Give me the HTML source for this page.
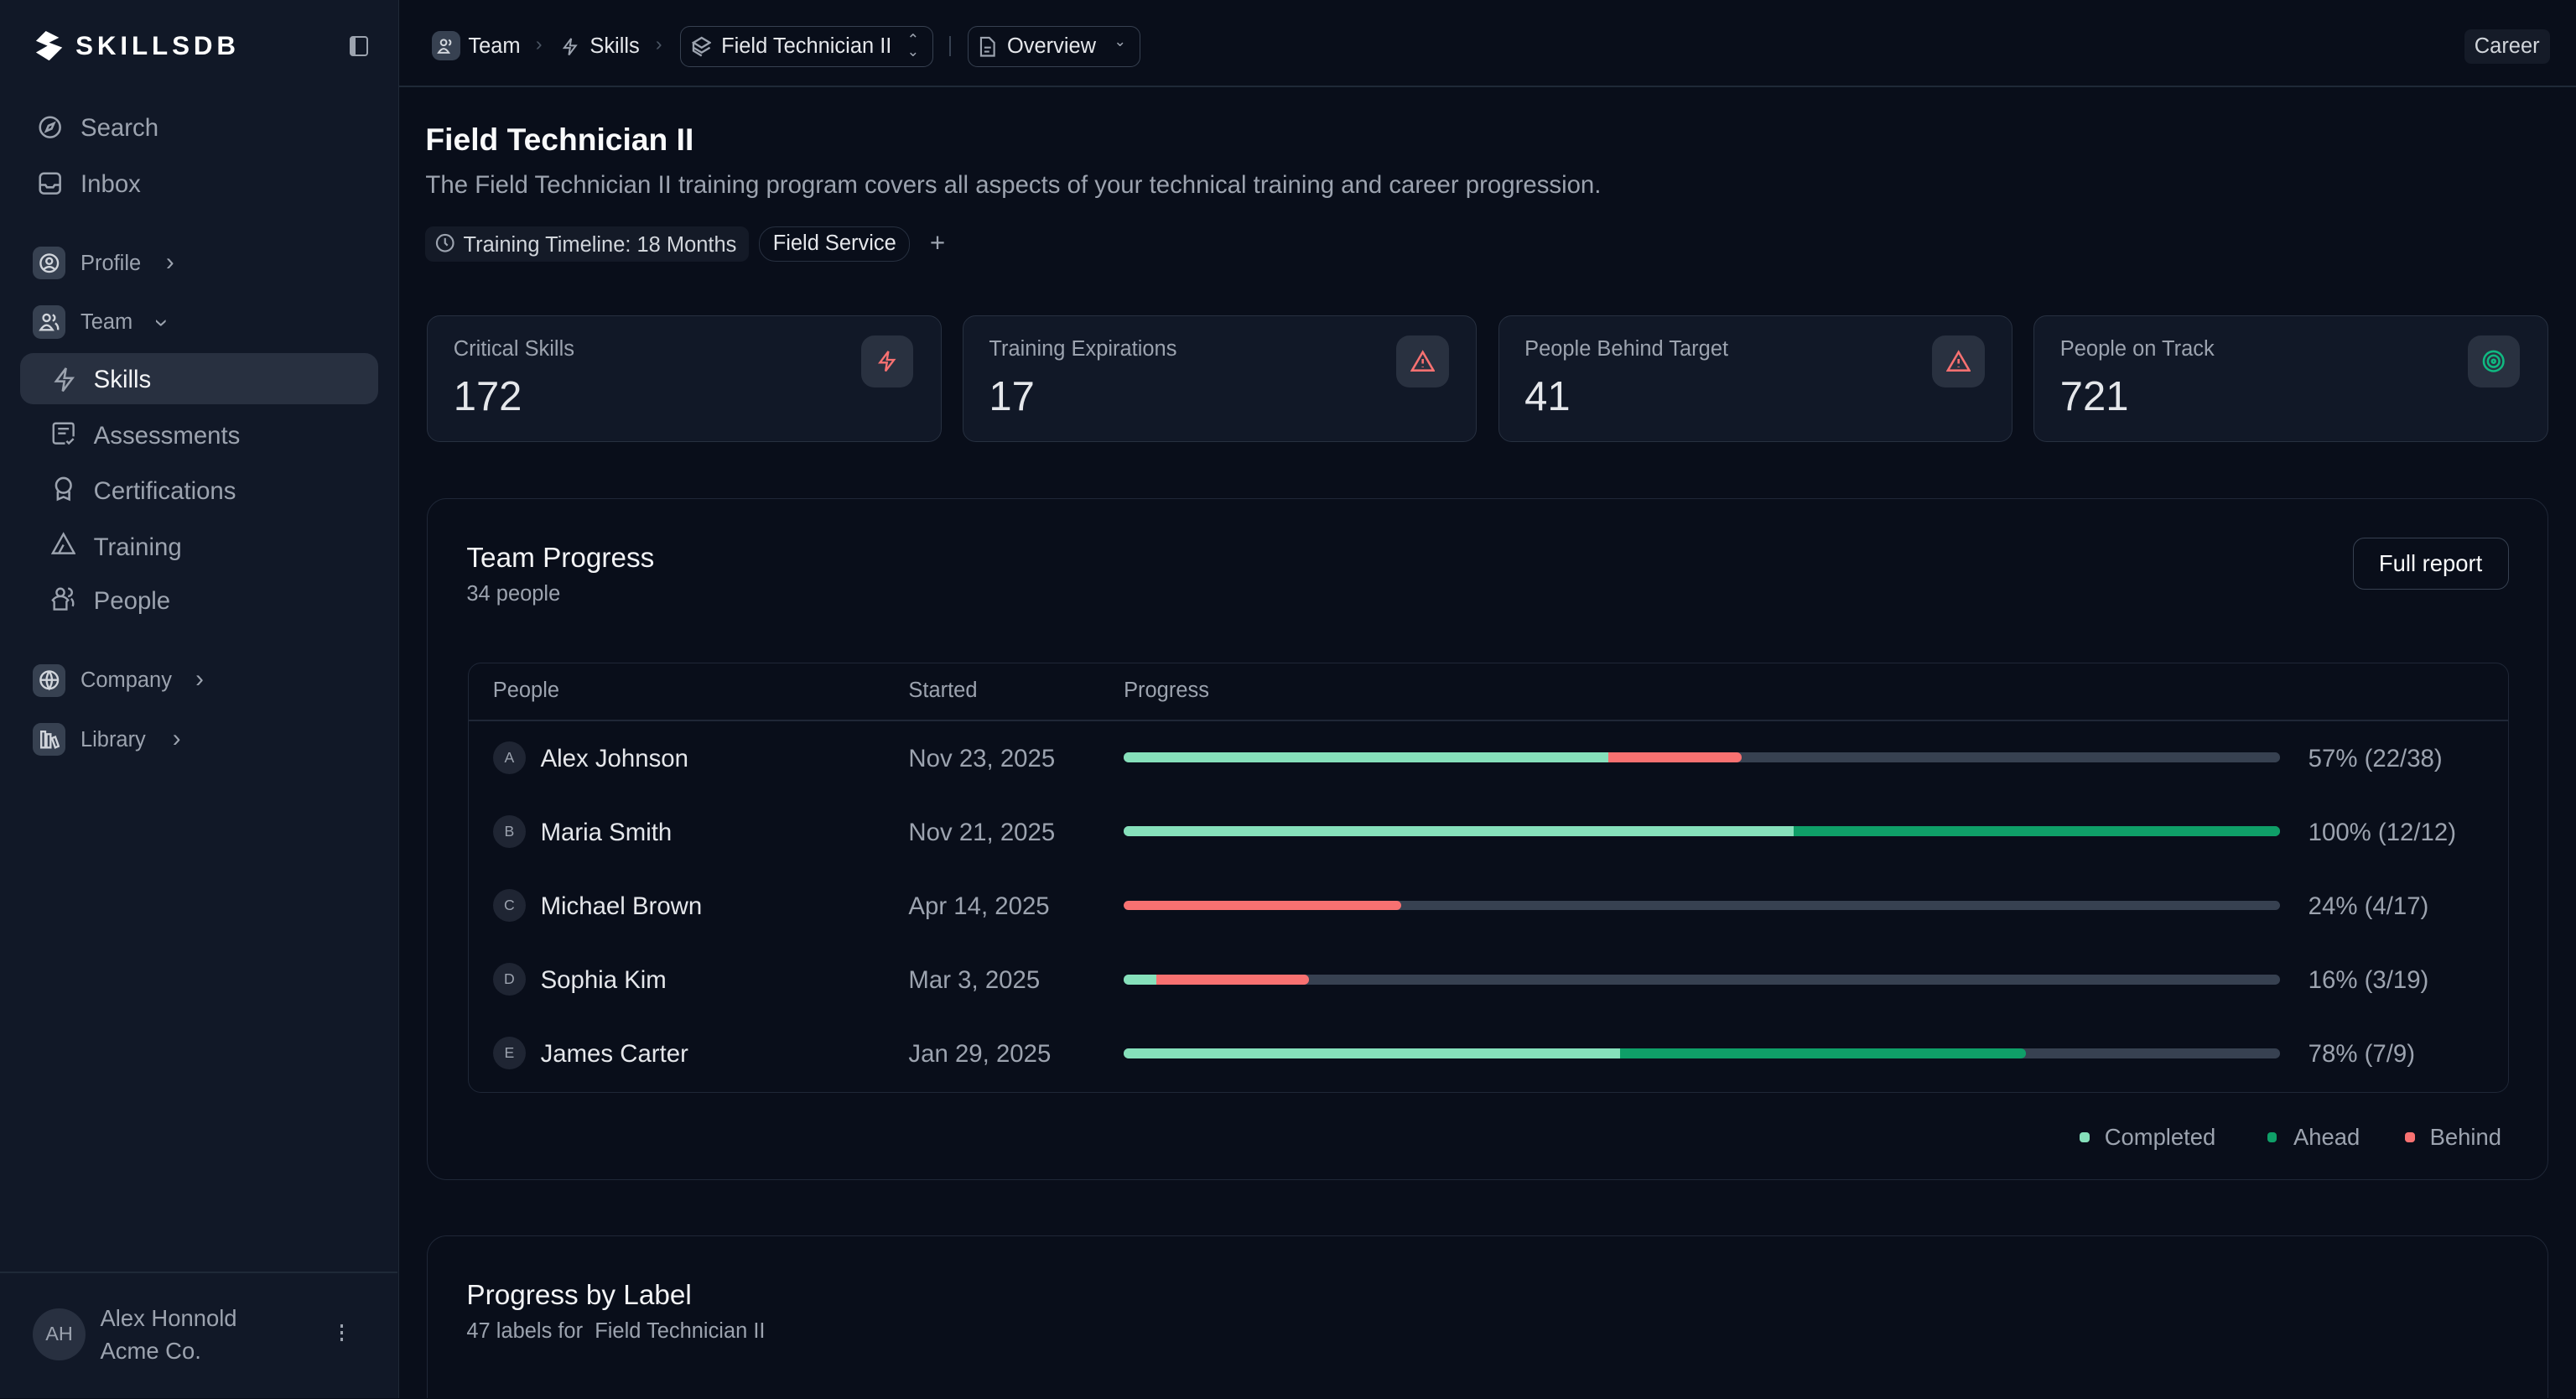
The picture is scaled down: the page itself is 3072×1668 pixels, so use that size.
<!DOCTYPE html>
<html><head><meta charset="utf-8"><style>
*{box-sizing:border-box;margin:0;padding:0}
html,body{width:3072px;height:1668px;overflow:hidden;background:#090e1a}
#w{zoom:1.95918;width:1568px;height:851px;position:relative;font-family:"Liberation Sans",sans-serif;color:#e5e7eb;background:#090e1a;overflow:hidden}
.a{position:absolute;white-space:nowrap}
#sb{position:absolute;left:0;top:0;width:243px;height:851px;background:#111827;border-right:1px solid #1f2937}
.nav{font-size:15px;color:#9ca3af;line-height:18px}
.gi{position:absolute;width:20px;height:20px;border-radius:5px;background:#374151;display:flex;align-items:center;justify-content:center}
svg{display:block}
.card{position:absolute;background:#111827;border:1px solid #273040;border-radius:8px}
.ib{position:absolute;width:32px;height:32px;border-radius:8px;background:#293140;display:flex;align-items:center;justify-content:center}
.lbl{font-size:13px;color:#9ca3af}
.val{font-size:25px;color:#e5e7eb}
.bar{position:absolute;left:684px;width:704px;height:6px;border-radius:3px;background:#374151;overflow:hidden}
.bar i{position:absolute;top:0;height:6px}
.lg{background:#86e0bb}.dg{background:#0f9f68}.rd{background:#f87171}
.av{position:absolute;left:300px;width:20px;height:20px;border-radius:10px;background:#1f2533;font-size:9px;color:#9ca3af;display:flex;align-items:center;justify-content:center}
.row{font-size:15px}
.chev{font-size:15px;color:#9ca3af}
</style></head><body><div id="w">
<div id="sb">
 <svg class="a" style="left:20px;top:19px" width="20" height="18" viewBox="0 0 20 18"><path d="M8 0 L16 4 L10 7 L18 10 L10 18 L2 13 L9 9 L2 6 Z" fill="#fff"/></svg>
 <div class="a" style="left:46px;top:19px;font-size:16px;font-weight:bold;letter-spacing:2.5px;color:#fff">SKILLSDB</div>
 <div class="a" style="left:213px;top:22px;width:11px;height:12px;border:1.5px solid #9ca3af;border-radius:2px;border-left-width:4px"></div>
 <svg class="a" style="left:23px;top:70px" width="15" height="15" viewBox="0 0 16 16" fill="none" stroke="#9ca3af" stroke-width="1.4"><circle cx="8" cy="8" r="6.5"/><path d="M10.5 5.5 L9 9 L5.5 10.5 L7 7 Z"/></svg>
 <div class="a nav" style="left:49px;top:69px">Search</div>
 <svg class="a" style="left:23px;top:104px" width="15" height="15" viewBox="0 0 16 16" fill="none" stroke="#9ca3af" stroke-width="1.4"><rect x="1.5" y="1.5" width="13" height="13" rx="2.5"/><path d="M1.5 9 H5 L6 10.5 H10 L11 9 H14.5"/></svg>
 <div class="a nav" style="left:49px;top:103px">Inbox</div>
 <div class="gi" style="left:20px;top:150px"><svg width="13" height="13" viewBox="0 0 16 16" fill="none" stroke="#d1d5db" stroke-width="1.5"><circle cx="8" cy="8" r="6.5"/><circle cx="8" cy="6.5" r="2.2"/><path d="M4 12.5 Q8 9 12 12.5"/></svg></div>
 <div class="a" style="left:49px;top:153px;font-size:13px;color:#9ca3af">Profile</div>
 <div class="a chev" style="left:101px;top:151px">›</div>
 <div class="gi" style="left:20px;top:186px"><svg width="13" height="13" viewBox="0 0 16 16" fill="none" stroke="#d1d5db" stroke-width="1.5"><circle cx="6" cy="5" r="2.5"/><path d="M1.5 14 Q6 7 10.5 14 Z"/><path d="M10.5 2.8 A2.3 2.3 0 0 1 10.5 7.2 M12.5 9 Q15 11 14.5 14"/></svg></div>
 <div class="a" style="left:49px;top:189px;font-size:13px;color:#9ca3af">Team</div>
 <div class="a chev" style="left:96px;top:188px;transform:rotate(90deg)">›</div>
 <div class="a" style="left:12px;top:215px;width:218px;height:31px;border-radius:8px;background:#283040"></div>
 <svg class="a" style="left:32px;top:223px" width="14" height="16" viewBox="0 0 14 16" fill="none" stroke="#9ca3af" stroke-width="1.3"><path d="M8 1 L2 9 H7 L6 15 L12 7 H7 Z"/></svg>
 <div class="a nav" style="left:57px;top:222px;color:#f3f4f6">Skills</div>
 <svg class="a" style="left:31px;top:256px" width="15" height="15" viewBox="0 0 16 16" fill="none" stroke="#9ca3af" stroke-width="1.3"><path d="M9 14.5 H3 Q1.5 14.5 1.5 13 V3 Q1.5 1.5 3 1.5 H13 Q14.5 1.5 14.5 3 V10"/><path d="M4.5 5 H11.5 M4.5 8 H9.5 M10 13 L11.5 14.5 L14.5 11.5"/></svg>
 <div class="a nav" style="left:57px;top:256px">Assessments</div>
 <svg class="a" style="left:32px;top:290px" width="13" height="15" viewBox="0 0 13 15" fill="none" stroke="#9ca3af" stroke-width="1.3"><circle cx="6.5" cy="5.5" r="4.5"/><path d="M3 9 V14 L6.5 12.5 L10 14 V9"/></svg>
 <div class="a nav" style="left:57px;top:290px">Certifications</div>
 <svg class="a" style="left:31px;top:323px" width="15" height="15" viewBox="0 0 16 16" fill="none" stroke="#9ca3af" stroke-width="1.3"><path d="M1 14.5 L8 2 L15 14.5 Z M5 14.5 L8 9"/></svg>
 <div class="a nav" style="left:57px;top:324px">Training</div>
 <svg class="a" style="left:31px;top:357px" width="15" height="15" viewBox="0 0 16 16" fill="none" stroke="#9ca3af" stroke-width="1.3"><circle cx="6" cy="4" r="2.5"/><path d="M2 15 V10 L1 9 Q3 6.5 6 6.5 Q9 6.5 11 9 L10 10 V15 Z"/><path d="M11 1.5 A2.5 2.5 0 0 1 11 6.5 M13 8 Q15 10 14 13"/></svg>
 <div class="a nav" style="left:57px;top:357px">People</div>
 <div class="gi" style="left:20px;top:404px"><svg width="13" height="13" viewBox="0 0 16 16" fill="none" stroke="#d1d5db" stroke-width="1.5"><circle cx="8" cy="8" r="6.5"/><path d="M1.5 8 H14.5 M8 1.5 Q4 8 8 14.5 Q12 8 8 1.5"/></svg></div>
 <div class="a" style="left:49px;top:407px;font-size:13px;color:#9ca3af">Company</div>
 <div class="a chev" style="left:119px;top:405px">›</div>
 <div class="gi" style="left:20px;top:440px"><svg width="13" height="13" viewBox="0 0 16 16" fill="none" stroke="#d1d5db" stroke-width="1.5"><path d="M2 2 V14 H5 V2 Z M6 4 V14 H9 V4 Z M10 7 L12.5 14 L15 13 L12.5 6 Z"/></svg></div>
 <div class="a" style="left:49px;top:443px;font-size:13px;color:#9ca3af">Library</div>
 <div class="a chev" style="left:105px;top:441px">›</div>
 <div class="a" style="left:0;top:774px;width:242px;height:1px;background:#1f2937"></div>
 <div class="a" style="left:20px;top:796px;width:32px;height:32px;border-radius:16px;background:#283040;font-size:12px;color:#9ca3af;display:flex;align-items:center;justify-content:center">AH</div>
 <div class="a" style="left:61px;top:794px;font-size:14px;color:#9ca3af">Alex Honnold</div>
 <div class="a" style="left:61px;top:814px;font-size:14px;color:#9ca3af">Acme Co.</div>
 <div class="a" style="left:207px;top:806px;width:2px;line-height:0"><i style="display:block;width:2px;height:2px;background:#9ca3af;margin-bottom:2px"></i><i style="display:block;width:2px;height:2px;background:#9ca3af;margin-bottom:2px"></i><i style="display:block;width:2px;height:2px;background:#9ca3af"></i></div>
</div>
<!-- top bar -->
<div class="a" style="left:243px;top:52px;width:1325px;height:1px;background:#1f2937"></div>
<div class="gi" style="left:263px;top:19px;width:17px;height:18px;background:#374151"><svg width="11" height="11" viewBox="0 0 16 16" fill="none" stroke="#d1d5db" stroke-width="1.5"><circle cx="6" cy="5" r="2.5"/><path d="M1.5 14 Q6 7 10.5 14 Z"/><path d="M10.5 2.8 A2.3 2.3 0 0 1 10.5 7.2"/></svg></div>
<div class="a" style="left:285px;top:21px;font-size:13px">Team</div>
<div class="a" style="left:326px;top:20px;font-size:12px;color:#4b5563">›</div>
<svg class="a" style="left:342px;top:22px" width="10" height="13" viewBox="0 0 14 16" fill="none" stroke="#9ca3af" stroke-width="1.4"><path d="M8 1 L2 9 H7 L6 15 L12 7 H7 Z"/></svg>
<div class="a" style="left:359px;top:21px;font-size:13px">Skills</div>
<div class="a" style="left:399px;top:20px;font-size:12px;color:#4b5563">›</div>
<div class="a" style="left:414px;top:16px;width:154px;height:25px;border:1px solid #374151;border-radius:6px"></div>
<svg class="a" style="left:421px;top:22px" width="12" height="13" viewBox="0 0 12 13" fill="none" stroke="#9ca3af" stroke-width="1.2"><path d="M6 1 L11 4 L6 7 L1 4 Z M1 7 L6 10 L11 7 M1 4 V9 L6 12"/></svg>
<div class="a" style="left:439px;top:21px;font-size:13px">Field Technician II</div>
<div class="a" style="left:552px;top:21px;font-size:9px;color:#9ca3af;line-height:7px">⌃<br>⌄</div>
<div class="a" style="left:578px;top:22px;width:1px;height:12px;background:#374151"></div>
<div class="a" style="left:589px;top:16px;width:105px;height:25px;border:1px solid #374151;border-radius:6px"></div>
<svg class="a" style="left:596px;top:22px" width="10" height="13" viewBox="0 0 10 13" fill="none" stroke="#9ca3af" stroke-width="1.1"><path d="M1 1 H6 L9 4 V12 H1 Z M3 7 H7 M3 9.5 H6"/></svg>
<div class="a" style="left:613px;top:21px;font-size:13px">Overview</div>
<div class="a" style="left:678px;top:20px;font-size:9px;color:#9ca3af">⌄</div>
<div class="a" style="left:1500px;top:18px;width:52px;height:21px;border-radius:4px;background:#151b28;font-size:13px;color:#d1d5db;text-align:center;line-height:21px">Career</div>
<!-- header -->
<div class="a" style="left:259px;top:74px;font-size:19px;font-weight:bold;color:#f9fafb">Field Technician II</div>
<div class="a" style="left:259px;top:104px;font-size:15px;color:#9ca3af">The Field Technician II training program covers all aspects of your technical training and career progression.</div>
<div class="a" style="left:259px;top:138px;width:197px;height:21px;border-radius:5px;background:#141a27"></div>
<svg class="a" style="left:265px;top:142px" width="12" height="12" viewBox="0 0 12 12" fill="none" stroke="#9ca3af" stroke-width="1.1"><circle cx="6" cy="6" r="5"/><path d="M6 3 V6 L7.5 7.5"/></svg>
<div class="a" style="left:282px;top:142px;font-size:13px;color:#d1d5db">Training Timeline: 18 Months</div>
<div class="a" style="left:462px;top:138px;width:92px;height:21px;border-radius:10px;border:1px solid #273040;font-size:13px;color:#e5e7eb;text-align:center;line-height:20px">Field Service</div>
<div class="a" style="left:566px;top:139px;font-size:16px;color:#9ca3af">+</div>
<!-- stat cards -->
<div class="card" style="left:260px;top:192px;width:313px;height:77px"></div>
<div class="card" style="left:586px;top:192px;width:313px;height:77px"></div>
<div class="card" style="left:912px;top:192px;width:313px;height:77px"></div>
<div class="card" style="left:1238px;top:192px;width:313px;height:77px"></div>
<div class="a lbl" style="left:276px;top:205px">Critical Skills</div><div class="a val" style="left:276px;top:227px">172</div>
<div class="a lbl" style="left:602px;top:205px">Training Expirations</div><div class="a val" style="left:602px;top:227px">17</div>
<div class="a lbl" style="left:928px;top:205px">People Behind Target</div><div class="a val" style="left:928px;top:227px">41</div>
<div class="a lbl" style="left:1254px;top:205px">People on Track</div><div class="a val" style="left:1254px;top:227px">721</div>
<div class="ib" style="left:524px;top:204px"><svg width="12" height="16" viewBox="0 0 14 16" fill="none" stroke="#f87171" stroke-width="1.4"><path d="M8 1 L2 9 H7 L6 15 L12 7 H7 Z"/></svg></div>
<div class="ib" style="left:850px;top:204px"><svg width="15" height="14" viewBox="0 0 16 15" fill="none" stroke="#f87171" stroke-width="1.4"><path d="M8 1.5 L15 13.5 H1 Z M8 6 V9 M8 11 V11.5"/></svg></div>
<div class="ib" style="left:1176px;top:204px"><svg width="15" height="14" viewBox="0 0 16 15" fill="none" stroke="#f87171" stroke-width="1.4"><path d="M8 1.5 L15 13.5 H1 Z M8 6 V9 M8 11 V11.5"/></svg></div>
<div class="ib" style="left:1502px;top:204px"><svg width="14" height="14" viewBox="0 0 14 14" fill="none" stroke="#10b981" stroke-width="1.3"><circle cx="7" cy="7" r="6"/><circle cx="7" cy="7" r="3.5"/><circle cx="7" cy="7" r="1"/></svg></div>
<!-- team progress -->
<div class="a" style="left:260px;top:303px;width:1291px;height:415px;border:1px solid #1f2737;border-radius:12px"></div>
<div class="a" style="left:284px;top:330px;font-size:17px;color:#f3f4f6">Team Progress</div>
<div class="a" style="left:284px;top:354px;font-size:13px;color:#9ca3af">34 people</div>
<div class="a" style="left:1432px;top:327px;width:95px;height:32px;border:1px solid #374151;border-radius:7px;font-size:14px;color:#f9fafb;text-align:center;line-height:31px">Full report</div>
<div class="a" style="left:285px;top:403px;width:1242px;height:262px;border:1px solid #1f2737;border-radius:8px"></div>
<div class="a" style="left:285px;top:438px;width:1242px;height:1px;background:#1f2737"></div>
<div class="a lbl" style="left:300px;top:413px">People</div>
<div class="a lbl" style="left:553px;top:413px">Started</div>
<div class="a lbl" style="left:684px;top:413px">Progress</div>

<div class="av" style="top:451px">A</div><div class="a row" style="left:329px;top:453px">Alex Johnson</div><div class="a row" style="left:553px;top:453px;color:#9ca3af">Nov 23, 2025</div>
<div class="bar" style="top:458px"><i class="lg" style="left:0;width:295px"></i><i class="rd" style="left:295px;width:81px;border-radius:0 3px 3px 0"></i></div>
<div class="a row" style="left:1405px;top:453px;color:#9ca3af">57% (22/38)</div>

<div class="av" style="top:496px">B</div><div class="a row" style="left:329px;top:498px">Maria Smith</div><div class="a row" style="left:553px;top:498px;color:#9ca3af">Nov 21, 2025</div>
<div class="bar" style="top:503px"><i class="lg" style="left:0;width:408px"></i><i class="dg" style="left:408px;width:296px"></i></div>
<div class="a row" style="left:1405px;top:498px;color:#9ca3af">100% (12/12)</div>

<div class="av" style="top:541px">C</div><div class="a row" style="left:329px;top:543px">Michael Brown</div><div class="a row" style="left:553px;top:543px;color:#9ca3af">Apr 14, 2025</div>
<div class="bar" style="top:548px"><i class="rd" style="left:0;width:169px;border-radius:3px"></i></div>
<div class="a row" style="left:1405px;top:543px;color:#9ca3af">24% (4/17)</div>

<div class="av" style="top:586px">D</div><div class="a row" style="left:329px;top:588px">Sophia Kim</div><div class="a row" style="left:553px;top:588px;color:#9ca3af">Mar 3, 2025</div>
<div class="bar" style="top:593px"><i class="lg" style="left:0;width:20px"></i><i class="rd" style="left:20px;width:93px;border-radius:0 3px 3px 0"></i></div>
<div class="a row" style="left:1405px;top:588px;color:#9ca3af">16% (3/19)</div>

<div class="av" style="top:631px">E</div><div class="a row" style="left:329px;top:633px">James Carter</div><div class="a row" style="left:553px;top:633px;color:#9ca3af">Jan 29, 2025</div>
<div class="bar" style="top:638px"><i class="lg" style="left:0;width:302px"></i><i class="dg" style="left:302px;width:247px;border-radius:0 3px 3px 0"></i></div>
<div class="a row" style="left:1405px;top:633px;color:#9ca3af">78% (7/9)</div>

<div class="a lg" style="left:1266px;top:689px;width:6px;height:6px;border-radius:2px"></div><div class="a" style="left:1281px;top:684px;font-size:14px;color:#9ca3af">Completed</div>
<div class="a dg" style="left:1380px;top:689px;width:6px;height:6px;border-radius:2px"></div><div class="a" style="left:1396px;top:684px;font-size:14px;color:#9ca3af">Ahead</div>
<div class="a rd" style="left:1464px;top:689px;width:6px;height:6px;border-radius:2px"></div><div class="a" style="left:1479px;top:684px;font-size:14px;color:#9ca3af">Behind</div>
<!-- progress by label -->
<div class="a" style="left:260px;top:752px;width:1291px;height:99px;border:1px solid #1f2737;border-bottom:none;border-radius:12px 12px 0 0"></div>
<div class="a" style="left:284px;top:779px;font-size:17px;color:#f3f4f6">Progress by Label</div>
<div class="a" style="left:284px;top:803px;font-size:13px;color:#9ca3af">47 labels for &nbsp;Field Technician II</div>
</div></body></html>
